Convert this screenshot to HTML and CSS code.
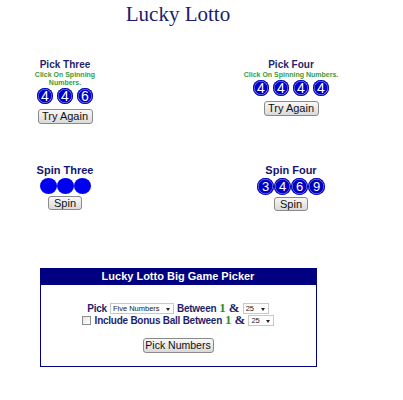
FILE: index.html
```html
<!DOCTYPE html>
<html lang="en">
<head>
  <meta charset="UTF-8">
  <title>Lucky Lotto</title>
  <link rel="stylesheet" href="styles.css">
</head>
<body>
  <div class="page">
    <h1 class="title">Lucky Lotto</h1>

    <!-- quick pick games -->
    <div class="row picks">
      <div class="game">
        <h3 class="game-name">Pick Three</h3>
        <p class="note narrow">Click On Spinning Numbers.</p>
        <div class="balls">
          <span class="ball">4</span><span class="ball">4</span><span class="ball">6</span>
        </div>
        <button class="btn btn-try">Try Again</button>
      </div>
      <div class="game">
        <h3 class="game-name">Pick Four</h3>
        <p class="note">Click On Spinning Numbers.</p>
        <div class="balls">
          <span class="ball">4</span><span class="ball">4</span><span class="ball">4</span><span class="ball">4</span>
        </div>
        <button class="btn btn-try">Try Again</button>
      </div>
    </div>

    <!-- spinners -->
    <div class="row spins">
      <div class="game">
        <h3 class="game-name big">Spin Three</h3>
        <div class="balls tight">
          <span class="ball blank"></span><span class="ball blank"></span><span class="ball blank"></span>
        </div>
        <button class="btn btn-spin">Spin</button>
      </div>
      <div class="game">
        <h3 class="game-name big">Spin Four</h3>
        <div class="balls tight">
          <span class="ball spun">3</span><span class="ball spun">4</span><span class="ball spun">6</span><span class="ball spun">9</span>
        </div>
        <button class="btn btn-spin">Spin</button>
      </div>
    </div>

    <!-- big game picker -->
    <div class="picker">
      <div class="picker-head">Lucky Lotto Big Game Picker</div>
      <div class="picker-body">
        <div class="line">
          <span class="lbl">Pick</span>
          <span class="dropdown wide">
            <select>
              <option>Five Numbers</option>
              <option>Six Numbers</option>
            </select>
          </span>
          <span class="lbl">Between</span>
          <span class="one">1</span>
          <span class="amp">&amp;</span>
          <span class="dropdown">
            <select><option>25</option></select>
          </span>
        </div>
        <div class="line">
          <span class="check"></span>
          <span class="lbl">Include Bonus Ball Between</span>
          <span class="one">1</span>
          <span class="amp">&amp;</span>
          <span class="dropdown">
            <select><option>25</option></select>
          </span>
        </div>
        <button class="btn btn-pick">Pick Numbers</button>
      </div>
    </div>
  </div>
</body>
</html>
```

FILE: styles.css
```css
body {
  margin: 0;
  background: #fff;
  font-family: "Liberation Sans", Arial, sans-serif;
}

.page {
  width: 340px;
  margin-left: 8px;
  padding-top: 2px;
}

.title {
  margin: 0;
  text-align: center;
  font-family: "Liberation Serif", "Times New Roman", serif;
  font-weight: normal;
  font-size: 21px;
  line-height: 24px;
  color: #1c1c6e;
}

.row {
  display: flex;
  justify-content: space-between;
  align-items: flex-start;
}

.picks {
  margin-top: 33px;
}

.spins {
  margin-top: 40px;
}

.game {
  width: 114px;
  display: flex;
  flex-direction: column;
  align-items: center;
  text-align: center;
}

.game-name {
  margin: 0;
  font-size: 10px;
  line-height: 12px;
  color: #1f1f6b;
}

.game-name.big {
  font-size: 11px;
  line-height: 13px;
  color: #14146e;
}

.note {
  margin: 0;
  font-size: 7px;
  line-height: 8px;
  font-weight: bold;
  color: #3c9a3c;
}

.note.narrow {
  width: 66px;
}

.balls {
  display: flex;
  gap: 4px;
  margin-top: 1px;
}

.balls.tight {
  gap: 0;
}

.ball {
  width: 16px;
  height: 16px;
  border-radius: 50%;
  background: #0000cc;
  box-shadow: inset 0 0 0 1px #0000b0, inset 0 0 0 1.5px #9a9aee;
  color: #fff;
  font-size: 14px;
  line-height: 16px;
  text-align: center;
}

.ball.blank {
  width: 17px;
  height: 16px;
  background: #0000f0;
  box-shadow: none;
}

.ball.spun {
  width: 17px;
  height: 17px;
  line-height: 17px;
  font-size: 13px;
  background: #0000c4;
}

.btn {
  display: block;
  height: 15px;
  padding: 0;
  border: 1px solid #8a8a8a;
  border-radius: 3px;
  background: linear-gradient(#f8f8f8, #dadada);
  color: #111;
  font-family: "Liberation Sans", Arial, sans-serif;
  font-size: 11px;
  line-height: 13px;
}

.btn-try {
  width: 55px;
  margin-top: 5px;
}

.btn-spin {
  width: 34px;
  height: 14px;
  line-height: 12px;
  margin-top: 2px;
}

.picker {
  width: 275px;
  margin: 57px auto 0;
  border: 1px solid #000080;
}

.picker-head {
  height: 16px;
  line-height: 15px;
  background: #000080;
  color: #fff;
  font-weight: bold;
  font-size: 11px;
  text-align: center;
}

.picker-body {
  display: flex;
  flex-direction: column;
  align-items: center;
  padding: 17px 0 13px;
}

.line {
  display: flex;
  align-items: center;
  gap: 3px;
  height: 12px;
}

.lbl {
  font-size: 10px;
  font-weight: bold;
  letter-spacing: -0.25px;
  color: #1f1f6b;
}

.one,
.amp {
  font-family: "Liberation Serif", "Times New Roman", serif;
  font-weight: bold;
  font-size: 13px;
}

.one {
  color: #2f8f2f;
}

.amp {
  color: #1f1f6b;
}

.dropdown {
  position: relative;
  display: inline-block;
}

.dropdown select {
  appearance: none;
  -webkit-appearance: none;
  display: block;
  width: 26px;
  height: 11px;
  margin: 0;
  padding: 0 0 0 2px;
  border: 1px solid #c8c8c8;
  border-radius: 0;
  background: #fff;
  color: #222;
  font-family: "Liberation Sans Narrow", "Liberation Sans", Arial, sans-serif;
  font-size: 7.5px;
  line-height: 9px;
}

.dropdown.wide select {
  width: 64px;
}

/* little down caret drawn over the select */
.dropdown::after {
  content: "";
  position: absolute;
  right: 4px;
  top: 5px;
  border-left: 2.5px solid transparent;
  border-right: 2.5px solid transparent;
  border-top: 3px solid #222;
  pointer-events: none;
}

.check {
  width: 7px;
  height: 7px;
  border: 1px solid #8d8d8d;
  background: linear-gradient(135deg, #e6e6e6, #fff);
  margin-right: 1px;
}

.btn-pick {
  width: 71px;
  margin-top: 12px;
  font-size: 10.5px;
}
```
